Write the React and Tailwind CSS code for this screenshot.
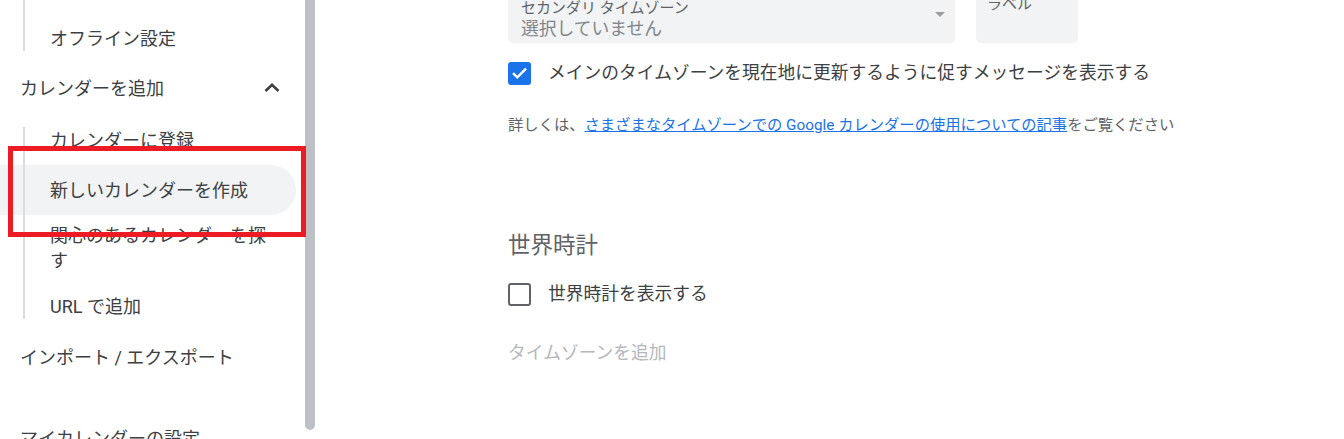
import React from "react";

const FONT = { fontFamily: 'Roboto, "Noto Sans CJK JP", sans-serif' };

function SubItem({ children, active, multi }) {
  return (
    <div
      className={
        "flex shrink-0 items-center pl-[50px] pr-[24px] text-[18px] text-[#3c4043] " +
        (multi ? "py-[8px] leading-[25px] min-h-[50px]" : "h-[50px] leading-[25px]") +
        (active ? " bg-[#f1f3f4] rounded-r-full" : "")
      }
    >
      {children}
    </div>
  );
}

function SubList({ children, className = "" }) {
  return (
    <div className={"relative flex shrink-0 flex-col " + className}>
      {children}
      <div className="absolute left-[23px] top-[12px] bottom-[12px] w-[2px] bg-[#dadce0]" />
    </div>
  );
}

function TopItem({ children, chevron }) {
  return (
    <div className="flex h-[50px] shrink-0 items-center justify-between pl-[20px] pr-[25px] text-[18px] leading-[25px] text-[#3c4043]">
      <span>{children}</span>
      {chevron && (
        <svg width="16" height="10" viewBox="0 0 16 10">
          <polyline points="1.5,8 8,1.8 14.5,8" fill="none" stroke="#3c4043" strokeWidth="2.6" />
        </svg>
      )}
    </div>
  );
}

export default function App() {
  return (
    <div className="relative flex h-[439px] w-[1344px] items-start overflow-hidden bg-white" style={FONT}>
      {/* Sidebar */}
      <div className="block w-[305px] shrink-0">
        <SubList className="-mt-[37px]">
          <SubItem>表示オプション</SubItem>
          <SubItem>オフライン設定</SubItem>
        </SubList>
        <TopItem chevron>カレンダーを追加</TopItem>
        <SubList className="mt-[2px] w-[296px]">
          <SubItem>カレンダーに登録</SubItem>
          <SubItem active>新しいカレンダーを作成</SubItem>
          <SubItem multi>関心のあるカレンダーを探す</SubItem>
          <SubItem>URL で追加</SubItem>
        </SubList>
        <div className="mt-[1px]">
          <TopItem>インポート / エクスポート</TopItem>
        </div>
        <div className="mt-[31px]">
          <TopItem>マイカレンダーの設定</TopItem>
        </div>
      </div>

      {/* Scrollbar */}
      <div className="h-[430px] w-[10px] shrink-0 rounded-b-full bg-[#bdc1c6]" />

      {/* Main */}
      <div className="block flex-1 pl-[193px] -mt-[13px]">
        <div className="flex gap-[21px]">
          <div className="flex h-[56px] w-[447px] justify-between rounded-b-[5px] bg-[#f1f3f4] pl-[13px] pr-[10px]">
            <div className="flex flex-col pt-[11px]">
              <span className="text-[15px] leading-[20px] text-[#5f6368]">セカンダリ タイムゾーン</span>
              <span className="text-[17.75px] leading-[22px] text-[#80868b]">選択していません</span>
            </div>
            <svg className="mt-[25px]" width="10" height="5" viewBox="0 0 10 5">
              <polygon points="0,0 10,0 5,5" fill="#9aa0a6" />
            </svg>
          </div>
          <div className="h-[56px] w-[102px] rounded-b-[5px] bg-[#f1f3f4] pl-[11px] pt-[5px]">
            <span className="text-[15px] leading-[20px] text-[#5f6368]">ラベル</span>
          </div>
        </div>

        <div className="mt-[18px] flex h-[24px] items-center gap-[17px]">
          <div className="flex h-[23px] w-[23px] items-center justify-center rounded-[3px] bg-[#1a73e8]">
            <svg width="17" height="14" viewBox="0 0 17 14">
              <polyline points="2,7.2 6.3,11.4 15,2.6" fill="none" stroke="white" strokeWidth="2.4" />
            </svg>
          </div>
          <span className="text-[17.75px] leading-[24px] text-[#3c4043]">
            メインのタイムゾーンを現在地に更新するように促すメッセージを表示する
          </span>
        </div>

        <div className="mt-[30px] text-[15.3px] leading-[20px] text-[#5f6368]">
          詳しくは、
          <span className="text-[#1a73e8] underline">
            さまざまなタイムゾーンでの Google カレンダーの使用についての記事
          </span>
          をご覧ください
        </div>

        <div className="mt-[95px] text-[22.5px] leading-[30px] text-[#5f6368]">世界時計</div>

        <div className="mt-[22px] flex h-[24px] items-center gap-[17px]">
          <div className="h-[23px] w-[23px] rounded-[3px] border-2 border-[#5f6368]" />
          <span className="text-[17.75px] leading-[24px] text-[#3c4043]">世界時計を表示する</span>
        </div>

        <div className="mt-[35px] text-[17.75px] leading-[24px] text-[#b4b7bb]">タイムゾーンを追加</div>
      </div>

      {/* Annotation */}
      <div className="pointer-events-none absolute left-[8px] top-[146px] h-[91px] w-[298px] border-[5px] border-[#ed1c24]" />
    </div>
  );
}
